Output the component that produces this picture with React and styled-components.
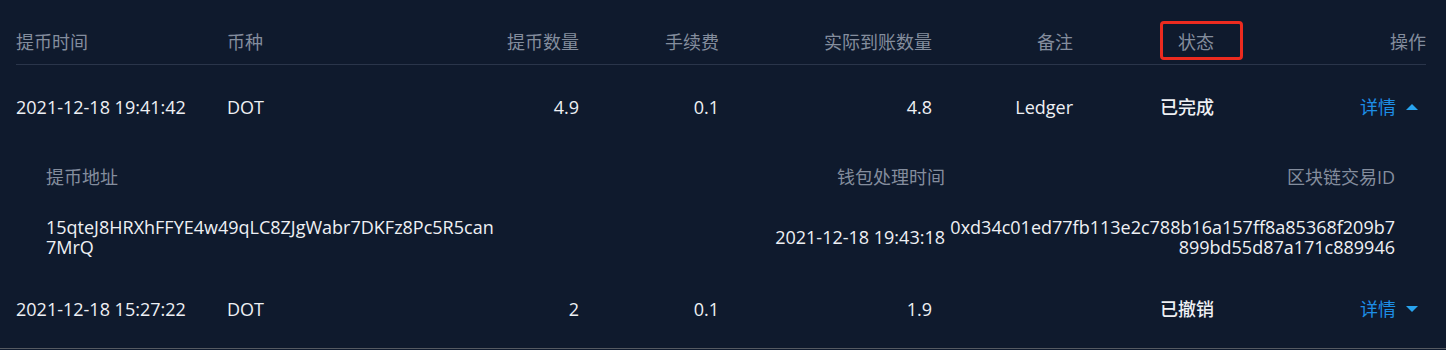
import React from "react";
import styled, { createGlobalStyle } from "styled-components";

const GlobalStyle = createGlobalStyle`
  html, body {
    margin: 0;
    padding: 0;
    background: #0f1a2d;
  }
  body {
    font-family: "Open Sans", "Noto Sans CJK SC", sans-serif;
    font-size: 18px;
    color: #e8ebf0;
  }
`;

const columns = "211px 200px 152px 140px 213px 141px 141px 212px";

const Page = styled.div`
  padding: 0 20px 0 16px;
  border-bottom: 1px solid #555a62;
`;

const HeaderRow = styled.div`
  display: grid;
  grid-template-columns: ${columns};
  align-items: end;
  height: 65px;
  padding-bottom: 10px;
  box-sizing: border-box;
  border-bottom: 1px solid #2a354a;
`;

const HeaderCell = styled.div`
  position: relative;
  color: #848d9d;
  line-height: 24px;
  text-align: ${({ $align }) => $align || "left"};
`;

const Highlight = styled.span`
  position: absolute;
  right: -29px;
  top: -9px;
  width: 83px;
  height: 39px;
  box-sizing: border-box;
  border: 3px solid #ec2b1f;
  border-radius: 4px;
`;

const Row = styled.div`
  display: grid;
  grid-template-columns: ${columns};
  align-items: center;
  height: ${({ $height }) => $height}px;
  padding-top: 1px;
  box-sizing: border-box;
`;

const Cell = styled.div`
  line-height: 24px;
  color: #eef0f4;
  text-align: ${({ $align }) => $align || "left"};
`;

const Status = styled(Cell)`
  font-weight: 500;
`;

const DetailToggle = styled.button`
  all: unset;
  cursor: pointer;
  display: inline-flex;
  align-items: center;
  gap: 10px;
  color: #1d8ee6;
  line-height: 24px;
  margin-right: 8px;
`;

const Caret = styled.span`
  width: 0;
  height: 0;
  border-left: 6.5px solid transparent;
  border-right: 6.5px solid transparent;
  ${({ $up }) =>
    $up
      ? "border-bottom: 6px solid #28a3ee;"
      : "border-top: 6px solid #28a3ee;"}
`;

const Detail = styled.div`
  display: grid;
  grid-template-columns: 452px 1fr 446px;
  column-gap: 4px;
  row-gap: 28px;
  align-items: center;
  padding: 18px 31px 12px 30px;
`;

const DetailLabel = styled.div`
  color: #848d9d;
  line-height: 24px;
  text-align: ${({ $align }) => $align || "left"};
`;

const DetailValue = styled.div`
  line-height: 20px;
  color: #eef0f4;
  word-break: break-all;
  text-align: ${({ $align }) => $align || "left"};
`;

const headers = [
  { label: "提币时间" },
  { label: "币种" },
  { label: "提币数量", align: "right" },
  { label: "手续费", align: "right" },
  { label: "实际到账数量", align: "right" },
  { label: "备注", align: "right" },
  { label: "状态", align: "right", highlighted: true },
  { label: "操作", align: "right" },
];

const records = [
  {
    time: "2021-12-18 19:41:42",
    coin: "DOT",
    amount: "4.9",
    fee: "0.1",
    received: "4.8",
    note: "Ledger",
    status: "已完成",
    open: true,
    address: "15qteJ8HRXhFFYE4w49qLC8ZJgWabr7DKFz8Pc5R5can7MrQ",
    walletTime: "2021-12-18 19:43:18",
    txId: "0xd34c01ed77fb113e2c788b16a157ff8a85368f209b7899bd55d87a171c889946",
  },
  {
    time: "2021-12-18 15:27:22",
    coin: "DOT",
    amount: "2",
    fee: "0.1",
    received: "1.9",
    note: "",
    status: "已撤销",
    open: false,
  },
];

const Record = ({ r, height }) => (
  <>
    <Row $height={height}>
      <Cell>{r.time}</Cell>
      <Cell>{r.coin}</Cell>
      <Cell $align="right">{r.amount}</Cell>
      <Cell $align="right">{r.fee}</Cell>
      <Cell $align="right">{r.received}</Cell>
      <Cell $align="right">{r.note}</Cell>
      <Status $align="right">{r.status}</Status>
      <Cell $align="right">
        <DetailToggle>
          详情
          <Caret $up={r.open} />
        </DetailToggle>
      </Cell>
    </Row>
    {r.open && (
      <Detail>
        <DetailLabel>提币地址</DetailLabel>
        <DetailLabel $align="right">钱包处理时间</DetailLabel>
        <DetailLabel $align="right">区块链交易ID</DetailLabel>
        <DetailValue>{r.address}</DetailValue>
        <DetailValue $align="right">{r.walletTime}</DetailValue>
        <DetailValue $align="right">{r.txId}</DetailValue>
      </Detail>
    )}
  </>
);

export default function App() {
  return (
    <>
      <GlobalStyle />
      <Page>
        <HeaderRow>
          {headers.map((h) => (
            <HeaderCell key={h.label} $align={h.align}>
              {h.label}
              {h.highlighted && <Highlight />}
            </HeaderCell>
          ))}
        </HeaderRow>
        <Record r={records[0]} height={82} />
        <Record r={records[1]} height={79} />
      </Page>
    </>
  );
}
